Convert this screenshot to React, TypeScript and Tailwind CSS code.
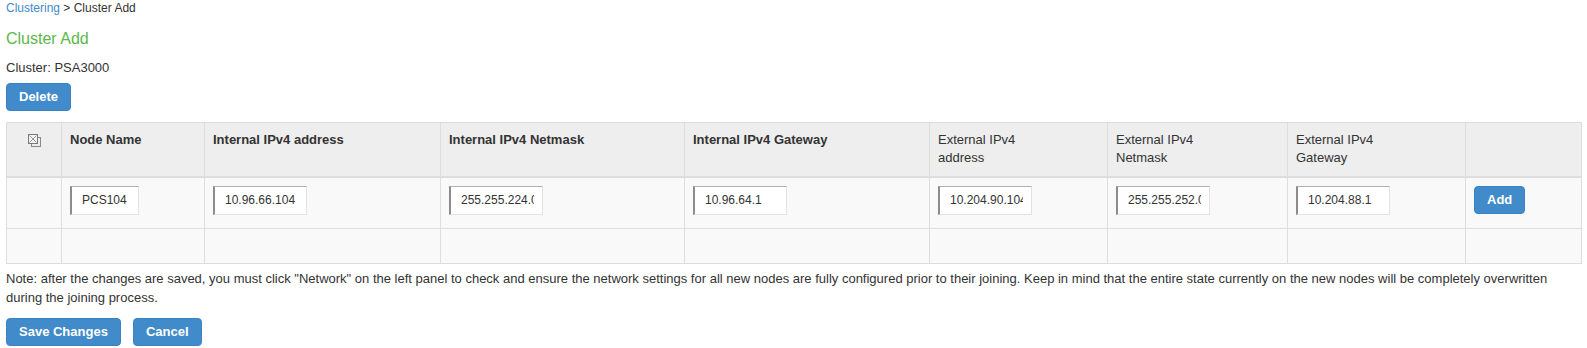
const FONT = "font-['Liberation_Sans',Arial,sans-serif]";

type Row = {
  name: string;
  intAddr: string;
  intMask: string;
  intGw: string;
  extAddr: string;
  extMask: string;
  extGw: string;
};

const rows: Row[] = [
  {
    name: "PCS104",
    intAddr: "10.96.66.104",
    intMask: "255.255.224.0",
    intGw: "10.96.64.1",
    extAddr: "10.204.90.104",
    extMask: "255.255.252.0",
    extGw: "10.204.88.1",
  },
];

function SelectAllIcon() {
  return (
    <svg width="13" height="13" viewBox="0 0 13 13" className="mx-auto mt-[3px]">
      <rect x="3.5" y="3.5" width="9" height="9" fill="none" stroke="#8a8a8a" />
      <rect x="0.5" y="0.5" width="9" height="9" fill="#f4f4f4" stroke="#7a7a7a" />
      <path d="M1.5 1.5 L8.5 8.5 M8.5 1.5 L1.5 8.5" stroke="#8a8a8a" strokeWidth="0.9" />
    </svg>
  );
}

function Button({ children }: { children: React.ReactNode }) {
  return (
    <button className="h-[28px] rounded-[4px] border border-[#3b82c4] bg-[#428bca] px-[12px] text-[13px] font-bold text-white">
      {children}
    </button>
  );
}

function Field({ value, wide = true }: { value: string; wide?: boolean }) {
  return (
    <input
      type="text"
      defaultValue={value}
      className={
        (wide ? "w-[94px] " : "w-[69px] ") +
        "block h-[29px] border-t border-r border-b border-l-2 border-t-[#b0b0b0] border-l-[#8c8c8c] border-r-[#e2e2e2] border-b-[#e2e2e2] bg-white pl-[10px] pr-[8px] text-[12px] text-[#333] outline-none"
      }
    />
  );
}

const th = "border border-[#ddd] border-b-2 px-2 pt-2 pb-2 text-left align-top leading-[18px]";
const td = "border border-[#ddd] px-2 pt-2 align-top";

export default function App() {
  return (
    <div className={`${FONT} min-h-[348px] bg-white pl-[6px] pr-[5px] text-[#333]`}>
      <div className="text-[12px] leading-[17px]">
        <a className="text-[#428bca]">Clustering</a> &gt; Cluster Add
      </div>

      <h1 className="mt-[11px] text-[16px] leading-[22px] text-[#5bb84a]">Cluster Add</h1>

      <div className="mt-[9px] text-[13px] leading-[18px]">Cluster: PSA3000</div>

      <div className="mt-[6px]">
        <Button>Delete</Button>
      </div>

      <table className="mt-[11px] w-full table-fixed border-collapse text-[13px]">
        <colgroup>
          <col className="w-[55px]" />
          <col className="w-[143px]" />
          <col className="w-[236px]" />
          <col className="w-[244px]" />
          <col className="w-[245px]" />
          <col className="w-[178px]" />
          <col className="w-[180px]" />
          <col className="w-[178px]" />
          <col />
        </colgroup>
        <thead>
          <tr className="h-[54px] bg-[#eeeeee]">
            <th className={th}>
              <SelectAllIcon />
            </th>
            <th className={th + " font-bold"}>Node Name</th>
            <th className={th + " font-bold"}>Internal IPv4 address</th>
            <th className={th + " font-bold"}>Internal IPv4 Netmask</th>
            <th className={th + " font-bold"}>Internal IPv4 Gateway</th>
            <th className={th + " font-normal"}>
              External IPv4
              <br />
              address
            </th>
            <th className={th + " font-normal"}>
              External IPv4
              <br />
              Netmask
            </th>
            <th className={th + " font-normal"}>
              External IPv4
              <br />
              Gateway
            </th>
            <th className={th}></th>
          </tr>
        </thead>
        <tbody>
          {rows.map((r) => (
            <tr key={r.name} className="h-[52px] bg-[#f9f9f9]">
              <td className={td}></td>
              <td className={td}>
                <Field value={r.name} wide={false} />
              </td>
              <td className={td}>
                <Field value={r.intAddr} />
              </td>
              <td className={td}>
                <Field value={r.intMask} />
              </td>
              <td className={td}>
                <Field value={r.intGw} />
              </td>
              <td className={td}>
                <Field value={r.extAddr} />
              </td>
              <td className={td}>
                <Field value={r.extMask} />
              </td>
              <td className={td}>
                <Field value={r.extGw} />
              </td>
              <td className={td}>
                <Button>Add</Button>
              </td>
            </tr>
          ))}
          <tr className="h-[35px] bg-[#f9f9f9]">
            {Array.from({ length: 9 }).map((_, i) => (
              <td key={i} className={td}></td>
            ))}
          </tr>
        </tbody>
      </table>

      <p className="mt-[5px] max-w-[1560px] text-[13px] leading-[19px]">
        Note: after the changes are saved, you must click "Network" on the left panel to check and ensure the
        network settings for all new nodes are fully configured prior to their joining. Keep in mind that the
        entire state currently on the new nodes will be completely overwritten during the joining process.
      </p>

      <div className="mt-[11px] flex gap-[12px]">
        <Button>Save Changes</Button>
        <Button>Cancel</Button>
      </div>
    </div>
  );
}
